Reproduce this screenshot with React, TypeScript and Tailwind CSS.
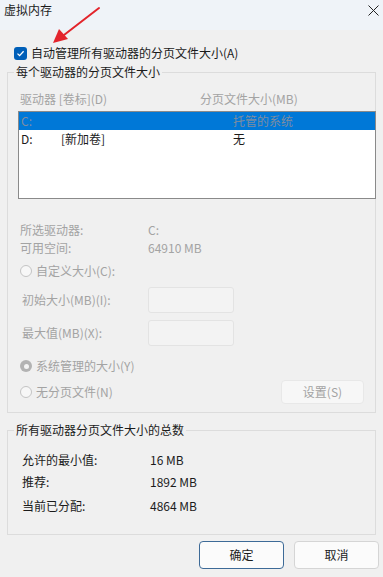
import React from 'react';

const font = { fontFamily: '"Noto Sans CJK SC", "Noto Sans", sans-serif' };

function Radio({ checked }: { checked?: boolean }) {
  return checked ? (
    <span className="flex h-[12px] w-[12px] items-center justify-center rounded-full bg-[#b3b3b3]">
      <span className="h-[5px] w-[5px] rounded-full bg-[#f4f4f4]" />
    </span>
  ) : (
    <span className="h-[12px] w-[12px] rounded-full border border-[#c4c4c4] bg-[#f7f7f7]" />
  );
}

function Row({ label, value, dim }: { label: string; value: string; dim?: boolean }) {
  return (
    <div className={`flex h-[16px] items-center ${dim ? 'text-[#a3a3a3]' : 'text-[#1b1b1b]'}`}>
      <span className="w-[128px]">{label}</span>
      <span>{value}</span>
    </div>
  );
}

export default function App() {
  return (
    <div className="relative h-[577px] w-[383px] overflow-hidden bg-[#f0f0f0] text-[12px] leading-[16px]" style={font}>
      {/* title bar */}
      <div className="flex h-[30px] items-start justify-between bg-[#eff3f8] pl-[4px] pr-[4px] pt-[2px]">
        <span className="text-[#1b1b1b]">虚拟内存</span>
        <svg width="11" height="11" viewBox="0 0 11 11" className="mt-[3px]">
          <path d="M0.5 0.5 L10.5 10.5 M10.5 0.5 L0.5 10.5" stroke="#222" strokeWidth="1" />
        </svg>
      </div>

      {/* auto manage checkbox */}
      <div className="ml-[14px] mt-[15px] flex h-[16px] items-center gap-[4px] text-[#1b1b1b]">
        <span className="flex h-[13px] w-[13px] items-center justify-center rounded-[3px] bg-[#005fb8]">
          <svg width="9" height="9" viewBox="0 0 9 9">
            <path d="M1.5 4.6 L3.6 6.6 L7.6 2.2" fill="none" stroke="#fff" strokeWidth="1.3" />
          </svg>
        </span>
        <span>自动管理所有驱动器的分页文件大小(A)</span>
      </div>

      {/* per drive */}
      <fieldset className="ml-[7px] mt-[3px] h-[349px] w-[369px] min-w-0 border border-[#dcdcdc] px-[11px] pb-[8px]">
        <legend className="-ml-[5px] px-[2px] text-[#1b1b1b]">每个驱动器的分页文件大小</legend>
        <div className="mt-[11px] flex h-[16px] items-center pl-[1px] text-[#a3a3a3]">
          <span className="w-[180px]">驱动器 [卷标](D)</span>
          <span>分页文件大小(MB)</span>
        </div>
        <div className="-ml-[1px] mt-[4px] h-[88px] w-[358px] border border-[#8a8a8a] bg-white">
          <div className="flex h-[18px] items-center bg-[#0078d7] pl-[2px] text-[#7f8da0]">
            <span className="w-[212px]">C:</span>
            <span>托管的系统</span>
          </div>
          <div className="flex h-[18px] items-center pl-[2px] text-[#1b1b1b]">
            <span className="w-[40px]">D:</span>
            <span className="w-[172px]">[新加卷]</span>
            <span>无</span>
          </div>
        </div>

        <div className="mt-[23px] pl-[1px]">
          <Row label="所选驱动器:" value="C:" dim />
          <div className="mt-[2px]">
            <Row label="可用空间:" value="64910 MB" dim />
          </div>
        </div>

        <div className="mt-[7px] flex h-[16px] items-center gap-[4px] pl-[1px] text-[#a3a3a3]">
          <Radio />
          <span>自定义大小(C):</span>
        </div>

        <div className="mt-[8px] flex h-[26px] items-center pl-[3px] text-[#a3a3a3]">
          <span className="w-[126px]">初始大小(MB)(I):</span>
          <span className="h-[26px] w-[86px] rounded-[3px] border border-[#e3e3e3] bg-[#f3f3f3]" />
        </div>
        <div className="mt-[7px] flex h-[26px] items-center pl-[3px] text-[#a3a3a3]">
          <span className="w-[126px]">最大值(MB)(X):</span>
          <span className="h-[26px] w-[86px] rounded-[3px] border border-[#e3e3e3] bg-[#f3f3f3]" />
        </div>

        <div className="mt-[12px] flex h-[16px] items-center gap-[4px] pl-[1px] text-[#a3a3a3]">
          <Radio checked />
          <span>系统管理的大小(Y)</span>
        </div>
        <div className="mt-[6px] flex h-[24px] items-center justify-between pl-[1px]">
          <div className="flex items-center gap-[4px] text-[#a3a3a3]">
            <Radio />
            <span>无分页文件(N)</span>
          </div>
          <button className="h-[24px] w-[83px] rounded-[4px] border border-[#e8e8e8] bg-[#f7f7f7] text-[#a3a3a3]">
            设置(S)
          </button>
        </div>
      </fieldset>

      {/* totals */}
      <fieldset className="ml-[7px] mt-[9px] h-[113px] w-[369px] min-w-0 border border-[#dcdcdc] px-[14px]">
        <legend className="-ml-[8px] px-[2px] text-[#1b1b1b]">所有驱动器分页文件大小的总数</legend>
        <div className="mt-[14px]">
          <Row label="允许的最小值:" value="16 MB" />
        </div>
        <div className="mt-[6px]">
          <Row label="推荐:" value="1892 MB" />
        </div>
        <div className="mt-[8px]">
          <Row label="当前已分配:" value="4864 MB" />
        </div>
      </fieldset>

      {/* buttons */}
      <div className="mt-[6px] flex justify-end gap-[10px] pr-[4px]">
        <button className="h-[28px] w-[85px] rounded-[4px] border border-[#3d6a97] bg-[#fbfbfb] text-[#1b1b1b]">确定</button>
        <button className="h-[28px] w-[85px] rounded-[4px] border border-[#d5d5d5] bg-[#fbfbfb] text-[#1b1b1b]">取消</button>
      </div>

      {/* red annotation arrow */}
      <svg className="pointer-events-none absolute left-0 top-0" width="120" height="50" viewBox="0 0 120 50">
        <path d="M99 8 L64 35" stroke="#e3242b" strokeWidth="2" strokeLinecap="round" />
        <path d="M53 43 L59 29 L68 39 Z" fill="#e3242b" />
      </svg>
    </div>
  );
}
